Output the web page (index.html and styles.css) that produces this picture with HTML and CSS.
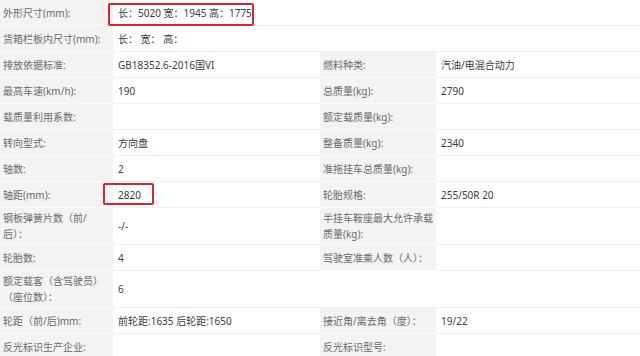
FILE: index.html
```html
<!DOCTYPE html>
<html lang="zh-CN">
<head>
<meta charset="utf-8">
<link rel="stylesheet" href="styles.css">
</head>
<body>
<div class="wrap">
<table class="spec">
  <colgroup>
    <col class="c-lab1"><col class="c-val1"><col class="c-lab2"><col class="c-val2">
  </colgroup>
  <tr><td class="lab">外形尺寸(mm):</td><td class="val" colspan="3">长：5020 宽：1945 高：1775</td></tr>
  <tr><td class="lab">货箱栏板内尺寸(mm):</td><td class="val" colspan="3">长：&nbsp;宽：&nbsp;高：</td></tr>
  <tr><td class="lab">排放依据标准:</td><td class="val">GB18352.6-2016国VI</td><td class="lab">燃料种类:</td><td class="val">汽油/电混合动力</td></tr>
  <tr><td class="lab">最高车速(km/h):</td><td class="val">190</td><td class="lab">总质量(kg):</td><td class="val">2790</td></tr>
  <tr><td class="lab">载质量利用系数:</td><td class="val"></td><td class="lab">额定载质量(kg):</td><td class="val"></td></tr>
  <tr><td class="lab">转向型式:</td><td class="val">方向盘</td><td class="lab">整备质量(kg):</td><td class="val">2340</td></tr>
  <tr><td class="lab">轴数:</td><td class="val">2</td><td class="lab">准拖挂车总质量(kg):</td><td class="val"></td></tr>
  <tr><td class="lab">轴距(mm):</td><td class="val">2820</td><td class="lab">轮胎规格:</td><td class="val">255/50R 20</td></tr>
  <tr><td class="lab">钢板弹簧片数（前/后）：</td><td class="val">-/-</td><td class="lab">半挂车鞍座最大允许承载质量(kg):</td><td class="val"></td></tr>
  <tr><td class="lab">轮胎数:</td><td class="val">4</td><td class="lab">驾驶室准乘人数（人）：</td><td class="val"></td></tr>
  <tr><td class="lab">额定载客（含驾驶员）（座位数）：</td><td class="val">6</td><td class="val" colspan="2"></td></tr>
  <tr><td class="lab">轮距（前/后)mm:</td><td class="val">前轮距:1635 后轮距:1650</td><td class="lab">接近角/离去角（度）：</td><td class="val">19/22</td></tr>
  <tr><td class="lab">反光标识生产企业:</td><td class="val"></td><td class="lab">反光标识型号:</td><td class="val"></td></tr>
</table>
<div class="mark mark-size"></div>
<div class="mark mark-wheelbase"></div>
</div>
</body>
</html>
```

FILE: styles.css
```css
html, body {
  margin: 0;
  padding: 0;
  background: #ffffff;
}

.wrap {
  position: relative;
  width: 640px;
  height: 356px;
  overflow: hidden;
}

.spec {
  width: 640px;
  border-collapse: collapse;
  table-layout: fixed;
  font-family: "Noto Sans", "Noto Sans CJK SC", sans-serif;
  font-size: 10px;
  line-height: 16px;
}

.c-lab1 { width: 113px; }
.c-val1 { width: 207px; }
.c-lab2 { width: 116px; }
.c-val2 { width: 204px; }

.spec td {
  height: 21px;
  padding: 2px 2px 2px 3px;
  vertical-align: middle;
  border-bottom: 1px solid #efefef;
}

.spec td.lab {
  background: #f3f3f3;
  color: #6a6a6a;
  border-bottom-color: #fbfbfb;
}

.spec td.val {
  background: #ffffff;
  color: #3c3c3c;
  padding-left: 5px;
}

.mark {
  position: absolute;
  border: 2px solid #d8262c;
  border-radius: 2px;
  box-sizing: border-box;
}

.mark-size {
  left: 108px;
  top: 3px;
  width: 146px;
  height: 23px;
}

.mark-wheelbase {
  left: 103px;
  top: 183px;
  width: 51px;
  height: 22px;
}
```
